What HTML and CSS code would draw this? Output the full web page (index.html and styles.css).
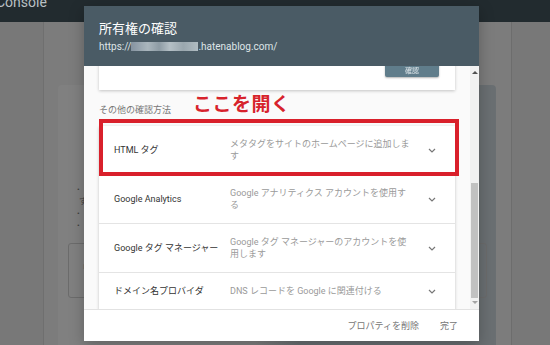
FILE: index.html
```html
<!DOCTYPE html>
<html lang="ja">
<head>
  <meta charset="UTF-8">
  <title>所有権の確認</title>
  <link rel="stylesheet" href="styles.css">
</head>
<body>

  <!-- PAGE (behind the dialog) -->
  <header class="topbar"><span class="brand">Console</span></header>
  <div class="shell">
    <aside class="rail"></aside>
    <main class="page">
      <div class="page-card">
        <div class="page-lines">
          <span>•</span><span class="wrap">す</span><span>•</span><span>•</span>
        </div>
        <div class="page-box"><span>i</span></div>
      </div>
    </main>
    <aside class="rail rail-right"></aside>
  </div>

  <!-- DIALOG -->
  <div class="dialog">
    <div class="dialog-head">
      <h1>所有権の確認</h1>
      <p class="site">https://<span class="blur"></span>.hatenablog.com/</p>
    </div>

    <div class="dialog-body">
      <div class="scroll">
        <div class="card card-top">
          <button class="btn">確認</button>
        </div>

        <div class="other">
          <span class="other-label">その他の確認方法</span>
          <span class="callout">ここを開く</span>
        </div>

        <div class="card methods">
          <div class="method">
            <span class="m-name">HTML タグ</span>
            <span class="m-desc">メタタグをサイトのホームページに追加します</span>
            <svg class="chev" viewBox="0 0 8 5"><polyline points="1,1 4,4 7,1"/></svg>
          </div>
          <div class="method">
            <span class="m-name">Google Analytics</span>
            <span class="m-desc">Google アナリティクス アカウントを使用する</span>
            <svg class="chev" viewBox="0 0 8 5"><polyline points="1,1 4,4 7,1"/></svg>
          </div>
          <div class="method">
            <span class="m-name">Google タグ マネージャー</span>
            <span class="m-desc">Google タグ マネージャーのアカウントを使用します</span>
            <svg class="chev" viewBox="0 0 8 5"><polyline points="1,1 4,4 7,1"/></svg>
          </div>
          <div class="method">
            <span class="m-name">ドメイン名プロバイダ</span>
            <span class="m-desc">DNS レコードを Google に関連付ける</span>
            <svg class="chev" viewBox="0 0 8 5"><polyline points="1,1 4,4 7,1"/></svg>
          </div>
          <!-- 注釈の赤枠 -->
          <div class="highlight"></div>
        </div>
      </div>

      <div class="scrollbar">
        <span class="arrow up"></span>
        <span class="thumb"></span>
        <span class="arrow down"></span>
      </div>
    </div>

    <div class="dialog-foot">
      <button>プロパティを削除</button>
      <button>完了</button>
    </div>
  </div>

</body>
</html>
```

FILE: styles.css
```css
* {box-sizing: border-box; margin:0; padding:0;}
body {
  width:550px; height:345px; overflow:hidden; position:relative;
  font-family:Roboto,"Noto Sans CJK JP",sans-serif;
  background:#797979; color:#333;
}
button {font-family:inherit; background:none; border:none; cursor:pointer;}

/* page behind */
.topbar {height:22px; background:#222b2f; overflow:hidden;}
.brand {
  display:block; margin:-7px 0 0 -4px;
  font-size:14px; line-height:18px; color:#b9c0c3;
}
.shell {display:flex; height:323px;}
.rail {width:44px; border-right:1px solid #6f6f6f; background:#787878;}
.rail-right {width:39px; border-right:none; border-left:1px solid #6d6d6d;}
.page {flex:1; display:flex; padding:63px 15px 0 14px; background:#7c7c7c;}
.page-card {
  flex:1; border-radius:4px 4px 0 0;
  background:linear-gradient(90deg,#808080 45%,#6a6f72 55%);
  padding:99px 9px 0 10px;
}
.page-lines {display:flex; flex-direction:column; padding-left:9px;}
.page-lines span {font-size:8px; line-height:12px; color:#3e3e3e;}
.page-lines .wrap {padding-left:2px;}
.page-box {
  margin-top:11px; height:55px;
  border:1px solid #6c6c6c; border-radius:3px;
  font-size:8px; color:#666; padding:18px 0 0 14px;
}

/* dialog */
.dialog {
  position:absolute; left:84px; top:6px; width:395px; height:335px;
  display:flex; flex-direction:column; background:#fff;
  box-shadow:0 4px 14px rgba(0,0,0,.25);
}
.dialog-head {height:60px; background:#4a5b65; padding:15px 15px 0;}
.dialog-head h1 {font-size:13px; line-height:16px; font-weight:400; color:#fff;}
.site {margin-top:3px; font-size:10px; line-height:13px; color:#dfe5e8;}
.blur {
  display:inline-block; width:67px; height:9px; vertical-align:-1px;
  background:linear-gradient(90deg,#8593a0,#aab6bd 25%,#8d9ba4 42%,#b5c0c6 58%,#9aa7ae 78%,#b0bcc2);
  filter:blur(.7px);
}

.dialog-body {height:243px; display:flex; background:#fafafa;}
.scroll {flex:1; overflow:hidden; padding:0 15px;}
.card {background:#fff; box-shadow:0 1px 3px rgba(0,0,0,.22);}

.card-top {
  margin-top:-20px; height:44px;
  display:flex; justify-content:flex-end; padding:9px 16px 0;
}
.btn {
  width:54px; height:22px; border-radius:2px;
  background:#607d8b; color:#dfe7eb; font-size:7px;
  padding-top:8px; box-shadow:0 1px 2px rgba(0,0,0,.3);
  filter:blur(.3px);
}

.other {height:36px; display:flex; align-items:flex-end; padding-bottom:10px;}
.other-label {font-size:9px; line-height:12px; color:#777;}
.callout {
  margin-left:22px; font-size:19px; line-height:22px;
  font-weight:700; color:#d7232c; letter-spacing:.5px;
}

.methods {position:relative;}
.method {
  display:flex; align-items:center;
  padding:12px 19px 12px 15px;
  border-bottom:1px solid #e4e4e4;
}
.m-name {width:116px; flex-shrink:0; font-size:9px; line-height:12px; color:#333;}
.m-desc {width:183px; font-size:9px; line-height:12px; color:#9a9a9a;}
.chev {
  width:8px; height:5px; margin-left:auto;
  fill:none; stroke:#777; stroke-width:1.2;
}
.highlight {
  position:absolute; left:0; top:-7px; width:360px; height:57px;
  border:4px solid #d9202b;
}

.scrollbar {
  width:9px; background:#f1f1f1;
  display:flex; flex-direction:column; align-items:center;
}
.arrow {width:0; height:0; border-left:3px solid transparent; border-right:3px solid transparent;}
.arrow.up {margin-top:5px; border-bottom:3px solid #505050;}
.arrow.down {margin-top:3px; border-top:3px solid #a3a3a3;}
.thumb {width:7px; height:115px; margin-top:109px; background:#c1c1c1;}

.dialog-foot {
  height:32px; display:flex; justify-content:flex-end; align-items:center;
  gap:21px; padding-right:21px;
  border-top:1px solid #e2e2e2;
}
.dialog-foot button {font-size:9px; color:#757575;}
```
